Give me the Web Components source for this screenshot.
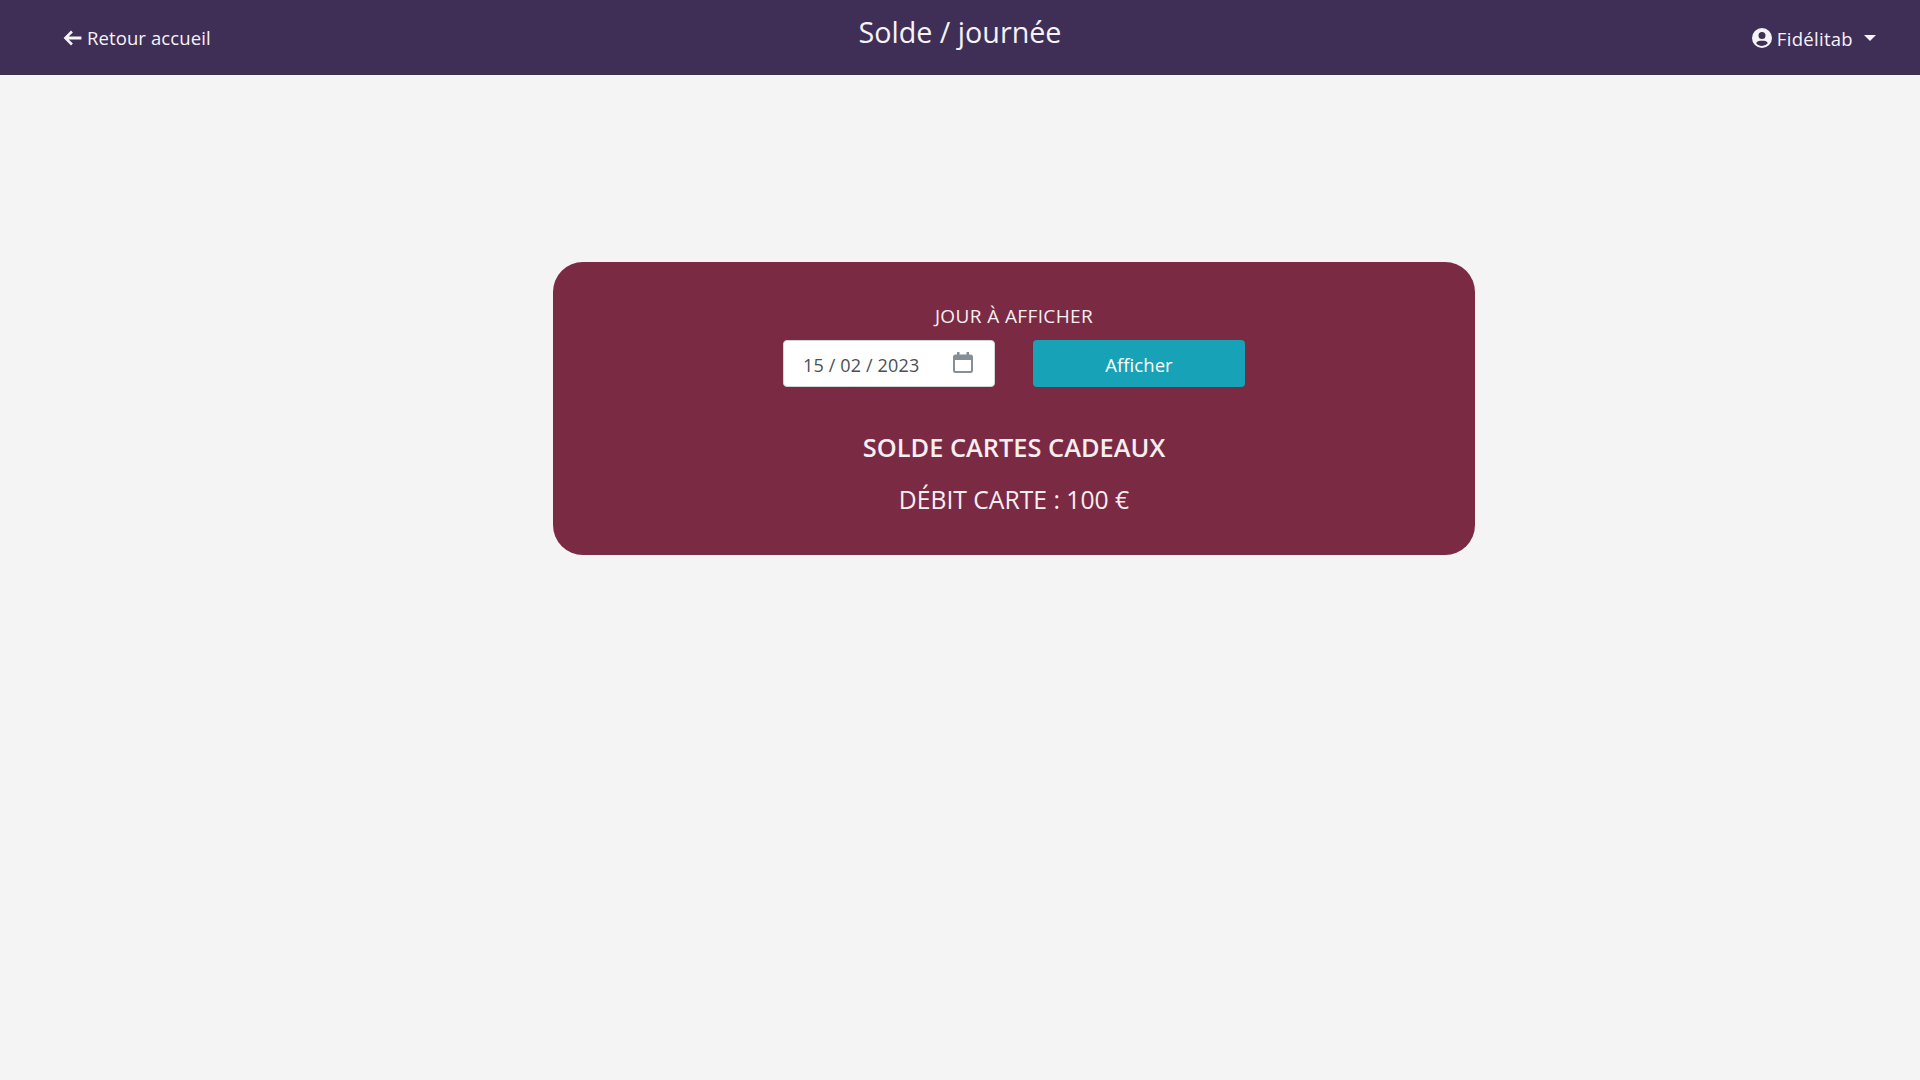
<!DOCTYPE html>
<html lang="fr"><head><meta charset="utf-8"><title>Solde / journée</title>
<style>
html,body{margin:0;padding:0;height:100%}
body{background:#f4f4f4;font-family:"Open Sans","Noto Sans",sans-serif;min-height:1080px}
</style></head><body>
<app-header></app-header>
<main-area><balance-card></balance-card></main-area>
<script>
function def(name,html,init){customElements.define(name,class extends HTMLElement{constructor(){super();this.attachShadow({mode:'open'}).innerHTML=html;}});}
def('app-header',`<style>
:host{display:grid;grid-template-columns:1fr auto 1fr;height:75px;background:#3f2e56;color:#f6f3f8;box-sizing:border-box}
.l{display:flex;align-items:center;gap:5px;font-size:18.5px;letter-spacing:.1px;padding-left:63px}
.t{font-size:28.7px;line-height:38px;padding-top:13px}
.r{display:flex;align-items:center;justify-content:flex-end;font-size:18.5px;letter-spacing:.3px;padding:1px 44px 0 0}
svg{display:block;fill:currentColor}
.caret{width:0;height:0;border:6px solid transparent;border-top-color:currentColor;border-bottom:0;margin-left:11px;margin-top:-1px}
</style>
<div class="l"><svg width="19" height="16" viewBox="0 0 19 16"><path d="M8 .6 .6 8 8 15.400l1.900-1.900-4.200-4.100H18.400V6.600H5.700l4.200-4.100z"/></svg><span>Retour accueil</span></div>
<div class="t">Solde / journée</div>
<div class="r"><svg width="20" height="20" viewBox="0 0 20 20" style="margin-right:5px"><path fill-rule="evenodd" d="M10 0a10 10 0 1 0 0 20 10 10 0 0 0 0-20zm0 4a3.500 3.500 0 1 1 0 7 3.500 3.500 0 0 1 0-7zm0 14c-2.300 0-4.400-1-5.800-2.700.6-1.500 2-2.500 3.800-2.500h4c1.800 0 3.200 1 3.800 2.500A7.600 7.600 0 0 1 10 18z"/></svg><span>Fidélitab</span><span class="caret"></span></div>`);
def('main-area',`<style>:host{display:block;padding:187px 0 0 553px}</style><slot></slot>`);
def('date-field',`<style>
:host{display:flex;align-items:center;justify-content:space-between;box-sizing:border-box;width:212px;height:47px;background:#fff;border:1px solid #ced4da;border-radius:4px;padding:2px 21px 0 19px;color:#495057;font-size:18px;letter-spacing:.15px}
svg{display:block;margin-top:-5px}
</style><span>15 / 02 / 2023</span><svg width="20" height="21" viewBox="0 0 20 21" fill="#868e96"><path fill-rule="evenodd" d="M4 0h2.500v2.500h7V0H16v2.500h1.500A2.500 2.500 0 0 1 20 5v13.500a2.500 2.500 0 0 1-2.500 2.500h-15A2.500 2.500 0 0 1 0 18.500V5a2.500 2.500 0 0 1 2.500-2.500H4zM2 8v10.300c0 .4.300.7.700.7h14.600c.4 0 .7-.3.700-.7V8z"/></svg>`);
def('balance-card',`<style>
:host{display:flex;flex-direction:column;align-items:center;box-sizing:border-box;width:922px;height:293px;background:#7b2a44;border-radius:30px;color:#f6eef1;padding-top:40px}
.lab{font-size:19px;line-height:28px;letter-spacing:.38px;margin-bottom:10px}
.row{display:flex;gap:38px;height:47px;margin-bottom:44px}
button{all:unset;box-sizing:border-box;width:212px;height:47px;background:#17a2b8;border-radius:4px;color:#fff;font-size:18.5px;text-align:center;line-height:49px;letter-spacing:.05px}
h2{margin:0;font-size:25.4px;font-weight:600;line-height:33px}
p{margin:19px 0 0;font-size:24.7px;line-height:33px}
</style>
<div class="lab">JOUR À AFFICHER</div>
<div class="row"><date-field></date-field><button>Afficher</button></div>
<h2>SOLDE CARTES CADEAUX</h2>
<p>DÉBIT CARTE : 100 €</p>`);
</script>
</body></html>
